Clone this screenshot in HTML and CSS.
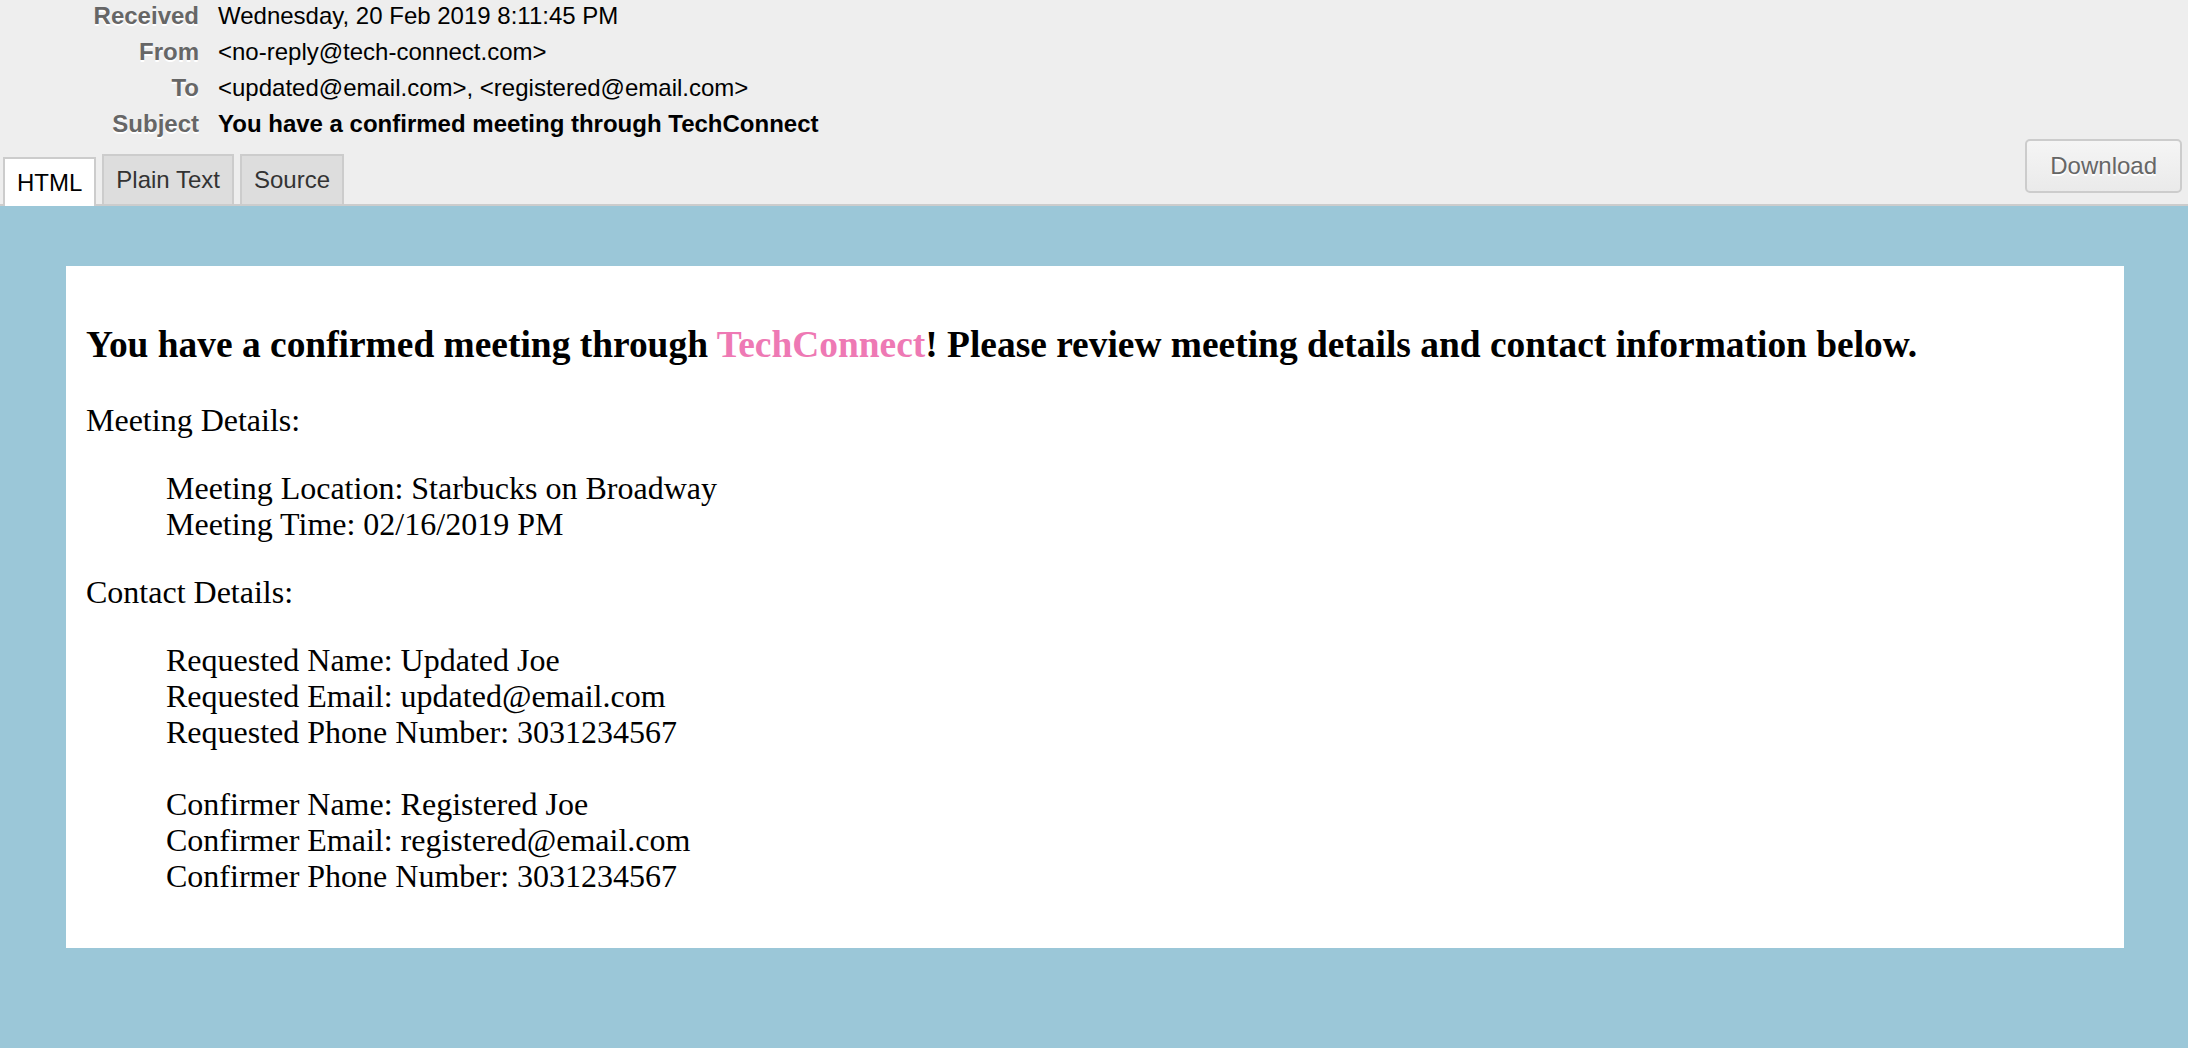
FILE: index.html
```html
<!DOCTYPE html>
<html>
<head>
<meta charset="utf-8">
<title>You have a confirmed meeting through TechConnect</title>
<link rel="stylesheet" href="styles.css">
</head>
<body>
<header class="header">
  <dl class="meta">
    <dt>Received</dt><dd>Wednesday, 20 Feb 2019 8:11:45 PM</dd>
    <dt>From</dt><dd>&lt;no-reply@tech-connect.com&gt;</dd>
    <dt>To</dt><dd>&lt;updated@email.com&gt;, &lt;registered@email.com&gt;</dd>
    <dt>Subject</dt><dd class="subject">You have a confirmed meeting through TechConnect</dd>
  </dl>
  <div class="bar">
    <nav class="tabs">
      <span class="tab active">HTML</span>
      <span class="tab">Plain Text</span>
      <span class="tab">Source</span>
    </nav>
    <button class="download">Download</button>
  </div>
</header>
<main class="view">
  <div class="card">
    <h3 class="title">You have a confirmed meeting through <span class="brand">TechConnect</span>! Please review meeting details and contact information below.</h3>
    <p class="para">Meeting Details:</p>
    <div class="indent">
      Meeting Location: Starbucks on Broadway<br>
      Meeting Time: 02/16/2019 PM
    </div>
    <p class="para">Contact Details:</p>
    <div class="indent">
      Requested Name: Updated Joe<br>
      Requested Email: updated@email.com<br>
      Requested Phone Number: 3031234567<br>
      <br>
      Confirmer Name: Registered Joe<br>
      Confirmer Email: registered@email.com<br>
      Confirmer Phone Number: 3031234567
    </div>
  </div>
</main>
</body>
</html>
```

FILE: styles.css
```css
html, body {
  margin: 0;
  padding: 0;
}

body {
  background: #9bc7d8;
  min-height: 1048px;
}

.header {
  background: #eeeeee;
  border-bottom: 2px solid #cccccc;
  font-family: "Liberation Sans", Arial, Helvetica, sans-serif;
  font-size: 24px;
  color: #000;
}

.meta {
  margin: 0;
  display: grid;
  grid-template-columns: 199px auto;
  column-gap: 19px;
  row-gap: 4px;
  line-height: 32px;
}

.meta dt {
  text-align: right;
  font-weight: bold;
  color: #666666;
  text-shadow: 0 2px 0 #ffffff;
}

.meta dd {
  margin: 0;
}

.meta .subject {
  font-weight: bold;
}

.bar {
  height: 64px;
  display: flex;
  align-items: flex-end;
  justify-content: space-between;
  padding-left: 3px;
}

.tabs {
  display: flex;
  align-items: flex-end;
  gap: 6px;
}

.tab {
  display: block;
  box-sizing: border-box;
  height: 50px;
  line-height: 48px;
  padding: 0 12px;
  background: #dddddd;
  border: 2px solid #cccccc;
  border-bottom: none;
  color: #333333;
}

.tab.active {
  height: 49px;
  line-height: 47px;
  padding: 0 12px;
  margin-bottom: -2px;
  background: #ffffff;
  color: #000000;
}

.download {
  align-self: flex-start;
  margin: -1px 6px 0 0;
  box-sizing: border-box;
  height: 54px;
  padding: 0 23px;
  border: 2px solid #cccccc;
  border-radius: 5px;
  background: linear-gradient(#f5f5f5, #eaeaea);
  font-family: "Liberation Sans", Arial, Helvetica, sans-serif;
  font-size: 24px;
  line-height: 50px;
  color: #666666;
  text-shadow: 0 2px 0 #ffffff;
}

.view {
  padding: 60px 64px 0 66px;
}

.card {
  background: #ffffff;
  padding: 20px 20px 22px;
  font-family: "Liberation Serif", "Times New Roman", serif;
  font-size: 32px;
  line-height: 36px;
  color: #000000;
}

.title {
  margin: 37px 0 36px;
  font-size: 37.44px;
  line-height: 43px;
  font-weight: bold;
}

.brand {
  color: #ee79b4;
}

.para {
  margin: 0 0 32px;
}

.indent {
  margin: 0 0 32px 80px;
}
```
